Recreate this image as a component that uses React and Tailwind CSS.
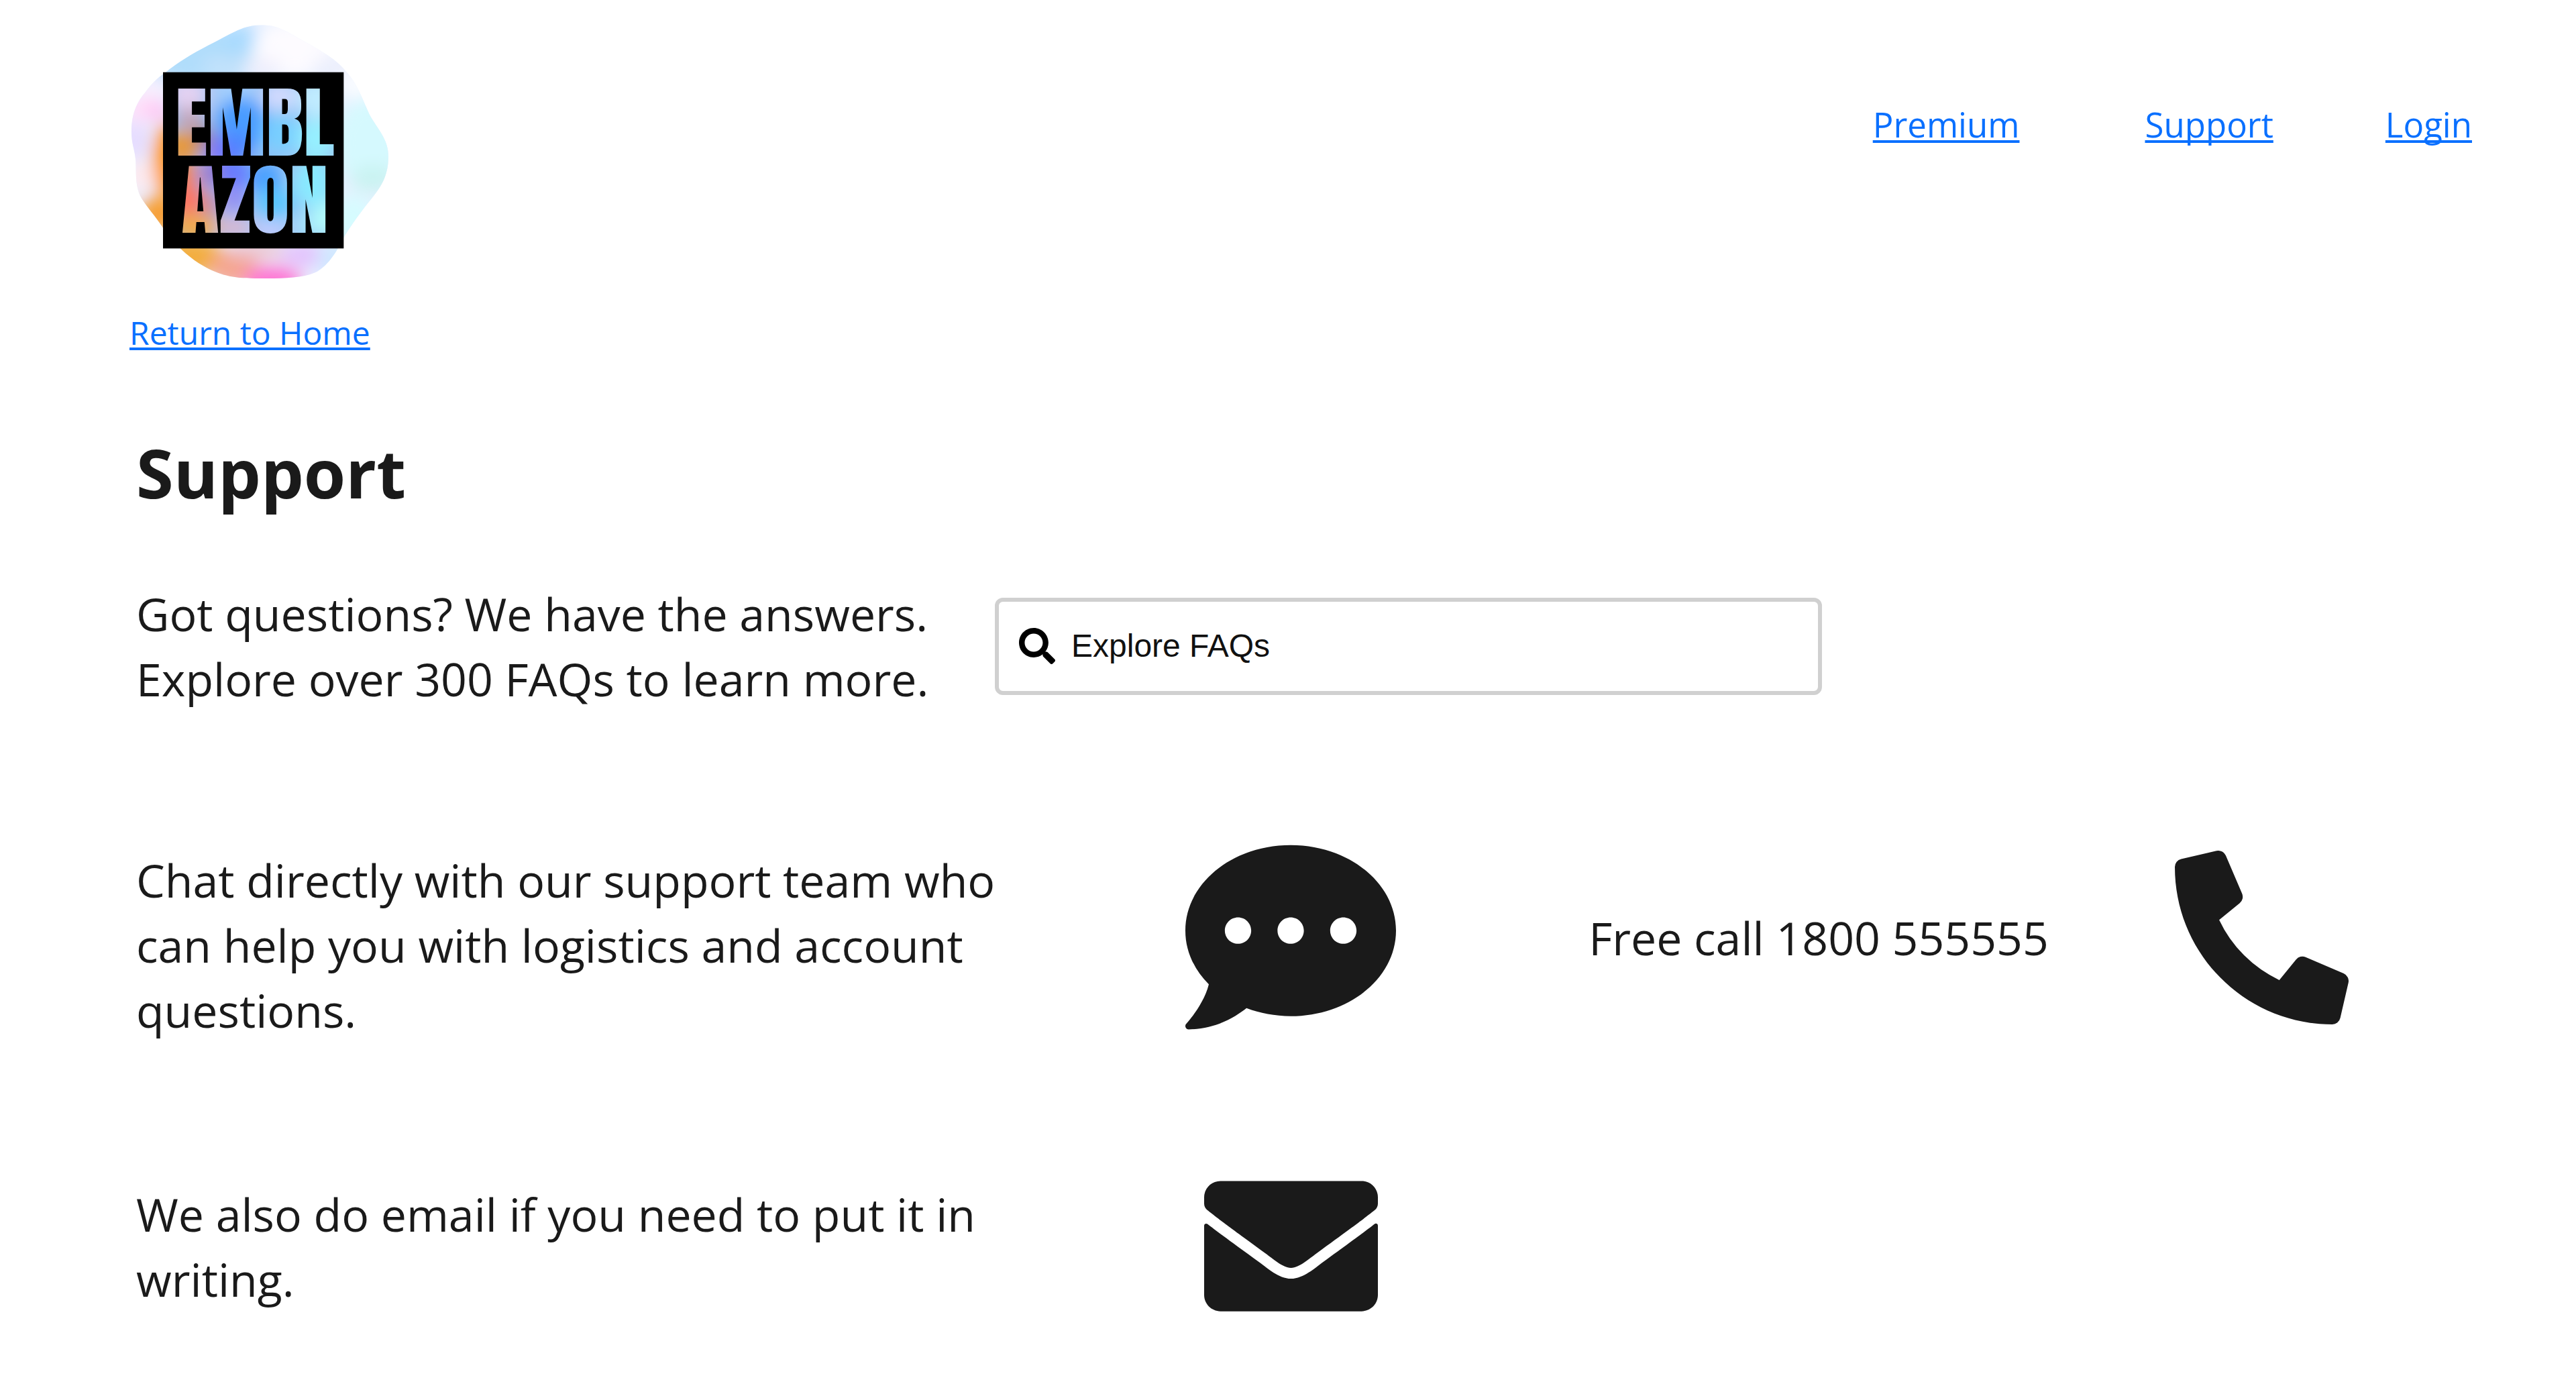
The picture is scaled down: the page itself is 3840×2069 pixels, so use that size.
import React from "react";
import { FaCommentDots, FaEnvelope, FaPhoneAlt, FaSearch } from "react-icons/fa";

const BLOB =
  "M660 53C730 53 770 80 840 120C920 165 990 200 1040 262C1100 330 1120 410 1150 465C1190 530 1228 570 1228 640C1228 720 1200 770 1160 820C1110 880 1060 950 1030 1000C1000 1060 960 1130 900 1160C830 1190 720 1186 630 1186C530 1186 470 1170 400 1130C330 1090 270 1030 220 960C180 900 150 870 125 830C95 780 100 720 98 660C92 600 80 590 79 530C79 440 110 390 140 355C180 300 210 280 235 262C300 210 370 170 450 130C530 90 580 53 660 53Z";

// Each spot of colour: [cx, cy, rx, ry, fill]
const BLOB_SPOTS = [
  [400, 190, 280, 130, "#b0ddfb"],
  [560, 110, 90, 60, "#a9dafe"],
  [480, 240, 90, 40, "#c4e2fb"],
  [800, 160, 180, 130, "#fdfbff"],
  [660, 240, 90, 40, "#f0effc"],
  [1000, 240, 110, 50, "#eceffc"],
  [1080, 320, 70, 60, "#fbfdff"],
  [1140, 580, 150, 200, "#d5f9fe"],
  [1160, 740, 100, 60, "#c9f3f1"],
  [1070, 920, 90, 110, "#d6fcff"],
  [170, 330, 80, 60, "#f6f0fe"],
  [130, 430, 90, 60, "#ffdff9"],
  [195, 435, 50, 45, "#ffc4f4"],
  [90, 570, 70, 80, "#e6dcff"],
  [110, 730, 70, 70, "#fdeaf0"],
  [240, 660, 65, 170, "#ff9a1a"],
  [200, 900, 90, 80, "#f79f36"],
  [330, 1090, 170, 90, "#f3ae3f"],
  [540, 1140, 110, 80, "#f5a58f"],
  [640, 1060, 140, 40, "#ecc4d0"],
  [710, 1195, 130, 65, "#ff74d3"],
  [850, 1080, 100, 60, "#e3c3fd"],
  [980, 1100, 70, 90, "#d0e8ff"],
];

const TEXT_SPOTS = [
  [330, 360, 90, 80, "#e4d2f2"],
  [340, 470, 60, 50, "#c5a2b4"],
  [310, 590, 90, 60, "#ee962a"],
  [400, 560, 40, 60, "#a08080"],
  [540, 350, 90, 50, "#a9d4ff"],
  [570, 500, 110, 130, "#4a9bff"],
  [470, 610, 50, 60, "#7a72ff"],
  [550, 600, 60, 60, "#4f80ff"],
  [740, 370, 80, 60, "#d5dcff"],
  [750, 540, 90, 90, "#78cfff"],
  [910, 380, 90, 90, "#c0ecff"],
  [910, 560, 90, 90, "#96f0ff"],
  [310, 710, 60, 50, "#ff8030"],
  [320, 830, 80, 80, "#ff7460"],
  [430, 720, 50, 60, "#9b78c8"],
  [360, 960, 110, 60, "#f2aa48"],
  [430, 860, 40, 60, "#d08a98"],
  [540, 720, 70, 60, "#6474ff"],
  [540, 830, 60, 60, "#938cf2"],
  [540, 960, 80, 50, "#dcb8d0"],
  [680, 740, 70, 80, "#479fff"],
  [720, 850, 80, 70, "#58c6ff"],
  [700, 970, 80, 40, "#c6ccff"],
  [890, 760, 90, 110, "#88eaff"],
  [860, 950, 60, 60, "#a4e2fb"],
  [950, 920, 60, 80, "#b4fdfa"],
];

function Spots({ spots }) {
  return spots.map(([cx, cy, rx, ry, fill]) => (
    <ellipse key={`${cx}-${cy}`} cx={cx} cy={cy} rx={rx} ry={ry} fill={fill} />
  ));
}

function Logo() {
  return (
    <svg viewBox="70 40 1170 1161" className="block h-[387px] w-[390px]" role="img" aria-label="Emblazon">
      <defs>
        <filter id="soft" x="-20%" y="-20%" width="140%" height="140%">
          <feGaussianBlur stdDeviation="36" />
        </filter>
        <clipPath id="blob">
          <path d={BLOB} />
        </clipPath>
        <pattern
          id="lettering"
          patternUnits="userSpaceOnUse"
          x="220"
          y="264"
          width="808"
          height="788"
          viewBox="220 264 808 788"
        >
          <rect x="220" y="264" width="808" height="788" fill="#9cc4f4" />
          <g filter="url(#soft)">
            <Spots spots={TEXT_SPOTS} />
          </g>
        </pattern>
      </defs>
      <g clipPath="url(#blob)">
        <rect x="70" y="40" width="1170" height="1161" fill="#e8f0ff" />
        <g filter="url(#soft)">
          <Spots spots={BLOB_SPOTS} />
        </g>
      </g>
      <rect x="220" y="264" width="808" height="788" fill="#000" />
      <g
        fill="url(#lettering)"
        textAnchor="middle"
        className="font-['Anton','Roboto_Condensed','Open_Sans',sans-serif] text-[350px]"
      >
        <text x="631" y="638">EMBL</text>
        <text x="631" y="983">AZON</text>
      </g>
    </svg>
  );
}

const LINK =
  "text-[#0a70ff] underline decoration-[4px] underline-offset-[4px] [text-decoration-skip-ink:none]";
const BODY = "text-[68px] leading-[97px]";

export default function App() {
  return (
    <div className="min-h-screen bg-white pr-[155px] pb-20 font-['Open_Sans',sans-serif] text-[#1a1a1a]">
      <header className="flex items-start justify-between pt-[33px] pl-[193px]">
        <div>
          <Logo />
          <a href="#home" className={`mt-11 block w-fit text-[48px] leading-[64px] ${LINK}`}>
            Return to Home
          </a>
        </div>
        <nav className="mt-[117px] flex text-[51px] leading-[70px]">
          <a href="#premium" className={LINK}>Premium</a>
          <a href="#support" className={`ml-[187px] ${LINK}`}>Support</a>
          <a href="#login" className={`ml-[167px] ${LINK}`}>Login</a>
        </nav>
      </header>

      <main className="pl-[203px]">
        <h1 className="mt-[106px] text-[101px] leading-[140px] font-bold">Support</h1>

        <div className="mt-[92px] grid grid-cols-[1280fr_882fr_692fr_628fr] items-center">
          <p className={BODY}>Got questions? We have the answers. Explore over 300 FAQs to learn more.</p>
          <div className="col-span-3">
            <label className="flex h-[145px] w-[56%] items-center gap-6 rounded-xl border-6 border-[#d0d0d0] px-[30px] text-black">
              <FaSearch className="size-[54px] shrink-0" aria-hidden="true" />
              <input
                type="search"
                aria-label="Explore FAQs"
                placeholder="Explore FAQs"
                className="min-w-0 flex-1 bg-transparent font-['Liberation_Sans',sans-serif] text-[48px] leading-[56px] outline-none placeholder:text-[#111111]"
              />
            </label>
          </div>

          <p className={`mt-[180px] -mr-6 self-end ${BODY}`}>
            Chat directly with our support team who can help you with logistics and account questions.
          </p>
          <FaCommentDots className="mt-[180px] size-[314px] justify-self-center" />
          <p className={`mt-[180px] justify-self-center whitespace-nowrap ${BODY}`}>Free call 1800 555555</p>
          <FaPhoneAlt className="mt-[180px] size-[259px] justify-self-center" />

          <p className={`mt-[174px] ${BODY}`}>We also do email if you need to put it in writing.</p>
          <FaEnvelope className="mt-[174px] size-[259px] justify-self-center" />
        </div>
      </main>
    </div>
  );
}
